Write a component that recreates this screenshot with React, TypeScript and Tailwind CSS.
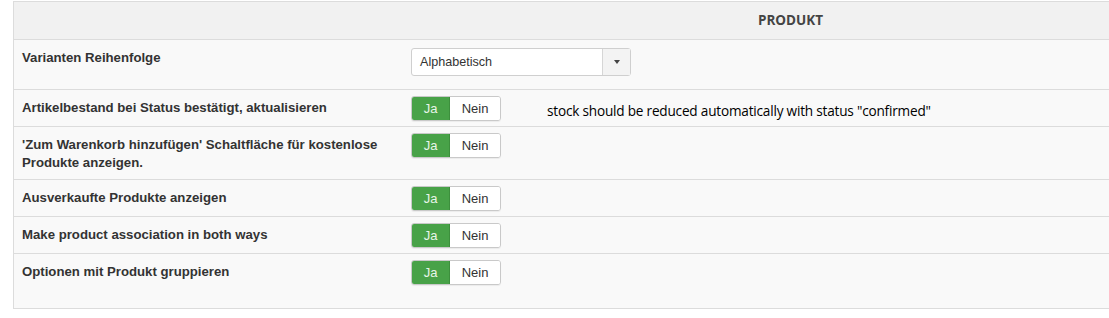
import React from "react";

type Row = {
    label: string,
    kind: "select" | "toggle",
    height: string,
    note?: string
}

const rows: Row[] = [
    { label: "Varianten Reihenfolge", kind: "select", height: "h-[50px]" },
    { label: "Artikelbestand bei Status bestätigt, aktualisieren", kind: "toggle", height: "h-[37px]", note: 'stock should be reduced automatically with status "confirmed"' },
    { label: "'Zum Warenkorb hinzufügen' Schaltfläche für kostenlose Produkte anzeigen.", kind: "toggle", height: "h-[53px]" },
    { label: "Ausverkaufte Produkte anzeigen", kind: "toggle", height: "h-[37px]" },
    { label: "Make product association in both ways", kind: "toggle", height: "h-[37px]" },
    { label: "Optionen mit Produkt gruppieren", kind: "toggle", height: "h-[54px]" },
];

const YesNo: React.FC = () => (
    <div className="flex h-[25px] w-[90px] rounded-[3px] border border-[#c9c9c9] overflow-hidden text-[13px] font-['Liberation_Sans',Arial,sans-serif] shadow-[0_1px_1px_rgba(0,0,0,0.06)]">
        <span className="flex w-[39px] items-center justify-center bg-[#48a248] text-[#e8f5e8] -my-px -ml-px border border-[#3d8f3d]">Ja</span>
        <span className="flex flex-1 items-center justify-center bg-white text-[#333]">Nein</span>
    </div>
);

const Dropdown: React.FC = () => (
    <div className="flex h-[28px] w-[220px] rounded-[3px] border border-[#cfcfcf] bg-white text-[12.6px] font-['Liberation_Sans',Arial,sans-serif] text-[#333]">
        <span className="flex flex-1 items-center pl-[8px]">Alphabetisch</span>
        <span className="flex w-[28px] items-center justify-center border-l border-[#d6d6d6] bg-[#f3f3f3]">
            <span className="h-0 w-0 border-x-[3.5px] border-t-[4px] border-x-transparent border-t-[#444]" />
        </span>
    </div>
);

export default function App() {
    return (
        <div className="w-[1109px] h-[318px] overflow-hidden bg-white">
            <div className="ml-[13px] mt-px w-[1170px] border-y border-l border-[#dcdcdc] bg-[#f9f9f9]">
                {/* Header */}
                <div className="flex h-[38px] items-center bg-[#f1f1f1] border-b border-[#dcdcdc]">
                    <div className="w-[388px]" />
                    <div className="flex-1 text-center pr-[4px] text-[13.5px] font-bold text-[#444] font-['Open_Sans',sans-serif]">PRODUKT</div>
                </div>
                {/* Rows */}
                {rows.map((row, idx) => (
                    <div
                        key={idx}
                        className={`flex ${row.height} ${idx < rows.length - 1 ? "border-b border-[#dcdcdc]" : ""}`}
                    >
                        <div className="w-[388px] pl-[8px] pr-[10px] pt-[9px] text-[13.2px] leading-[18px] font-bold text-[#333] font-['Liberation_Sans',Arial,sans-serif]">
                            {row.label}
                        </div>
                        <div className={`flex items-start ${row.kind === "select" ? "pt-[8px]" : "pt-[6px]"} pl-[9px]`}>
                            {row.kind === "select" ? <Dropdown /> : <YesNo />}
                            {row.note && (
                                <span className="ml-[46px] mt-[5px] text-[13.6px] text-black font-['Open_Sans',sans-serif] tracking-[-0.2px]">
                                    {row.note}
                                </span>
                            )}
                        </div>
                    </div>
                ))}
            </div>
        </div>
    )
}
